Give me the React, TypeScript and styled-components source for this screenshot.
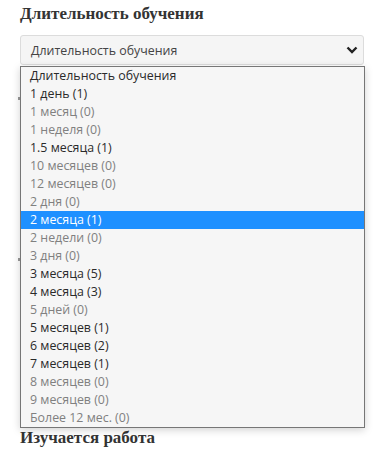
import styled, { createGlobalStyle } from "styled-components";

const GlobalStyle = createGlobalStyle`
    body {
        margin: 0;
        background: #ffffff;
    }
`;

interface IOption {
    label: string;
    count: number | null;
}

const options: IOption[] = [
    { label: "Длительность обучения", count: null },
    { label: "1 день", count: 1 },
    { label: "1 месяц", count: 0 },
    { label: "1 неделя", count: 0 },
    { label: "1.5 месяца", count: 1 },
    { label: "10 месяцев", count: 0 },
    { label: "12 месяцев", count: 0 },
    { label: "2 дня", count: 0 },
    { label: "2 месяца", count: 1 },
    { label: "2 недели", count: 0 },
    { label: "3 дня", count: 0 },
    { label: "3 месяца", count: 5 },
    { label: "4 месяца", count: 3 },
    { label: "5 дней", count: 0 },
    { label: "5 месяцев", count: 1 },
    { label: "6 месяцев", count: 2 },
    { label: "7 месяцев", count: 1 },
    { label: "8 месяцев", count: 0 },
    { label: "9 месяцев", count: 0 },
    { label: "Более 12 мес.", count: 0 },
];

const ChevronIcon = () => (
    <svg width="12" height="8" viewBox="0 0 12 8">
        <path d="M1.5 1.5 L6 6 L10.5 1.5" fill="none" stroke="#222" strokeWidth="2.4" />
    </svg>
);

const App = () => {
    const selected = 8;

    return (
        <Page>
            <GlobalStyle />
            <Heading>Длительность обучения</Heading>
            <SelectWrap>
                <SelectBox>
                    <span>Длительность обучения</span>
                    <ChevronIcon />
                </SelectBox>
                <Dropdown>
                    {options.map((o, i) => (
                        <Option key={i} $active={i === selected} $muted={o.count === 0}>
                            {o.count === null ? o.label : `${o.label} (${o.count})`}
                        </Option>
                    ))}
                </Dropdown>
            </SelectWrap>
            <HiddenList>
                <Mark $gap={32} />
                <Mark $gap={158} />
            </HiddenList>
            <Heading>Изучается работа</Heading>
        </Page>
    );
};

const Page = styled.div`
    padding: 0 28px 0 20px;
`;

const Heading = styled.h3`
    margin: 0;
    padding-top: 3px;
    font-family: "Liberation Serif", "Times New Roman", serif;
    font-size: 17px;
    font-weight: bold;
    color: #333333;
    line-height: 22px;
`;

const SelectWrap = styled.div`
    position: relative;
    margin-top: 10px;
`;

const SelectBox = styled.div`
    height: 28px;
    border: 1px solid #dcdcdc;
    border-radius: 3px;
    background: #f5f5f5;
    display: flex;
    align-items: center;
    justify-content: space-between;
    padding: 0 5px 0 10px;
    font-family: "Open Sans", sans-serif;
    font-size: 12.4px;
    color: #444444;
`;

const Dropdown = styled.div`
    position: absolute;
    top: calc(100% + 1px);
    left: 0;
    right: -1px;
    border: 1px solid #767676;
    background: #f6f6f6;
    box-shadow: 0 2px 8px rgba(0, 0, 0, 0.18);
    z-index: 2;
`;

const Option = styled.div<{ $active: boolean; $muted: boolean }>`
    height: 18px;
    line-height: 18px;
    padding-left: 9px;
    font-family: "Open Sans", sans-serif;
    font-size: 12.4px;
    white-space: nowrap;
    color: ${(p) => (p.$active ? "#ffffff" : p.$muted ? "#808080" : "#2a2a2a")};
    background: ${(p) => (p.$active ? "#1e90ff" : "transparent")};
`;

const HiddenList = styled.div`
    height: 359px;
    display: flex;
    flex-direction: column;
    margin-left: -2px;
`;

const Mark = styled.div<{ $gap: number }>`
    margin-top: ${(p) => p.$gap}px;
    width: 2px;
    height: 3px;
    background: #999999;
`;

export default App;
